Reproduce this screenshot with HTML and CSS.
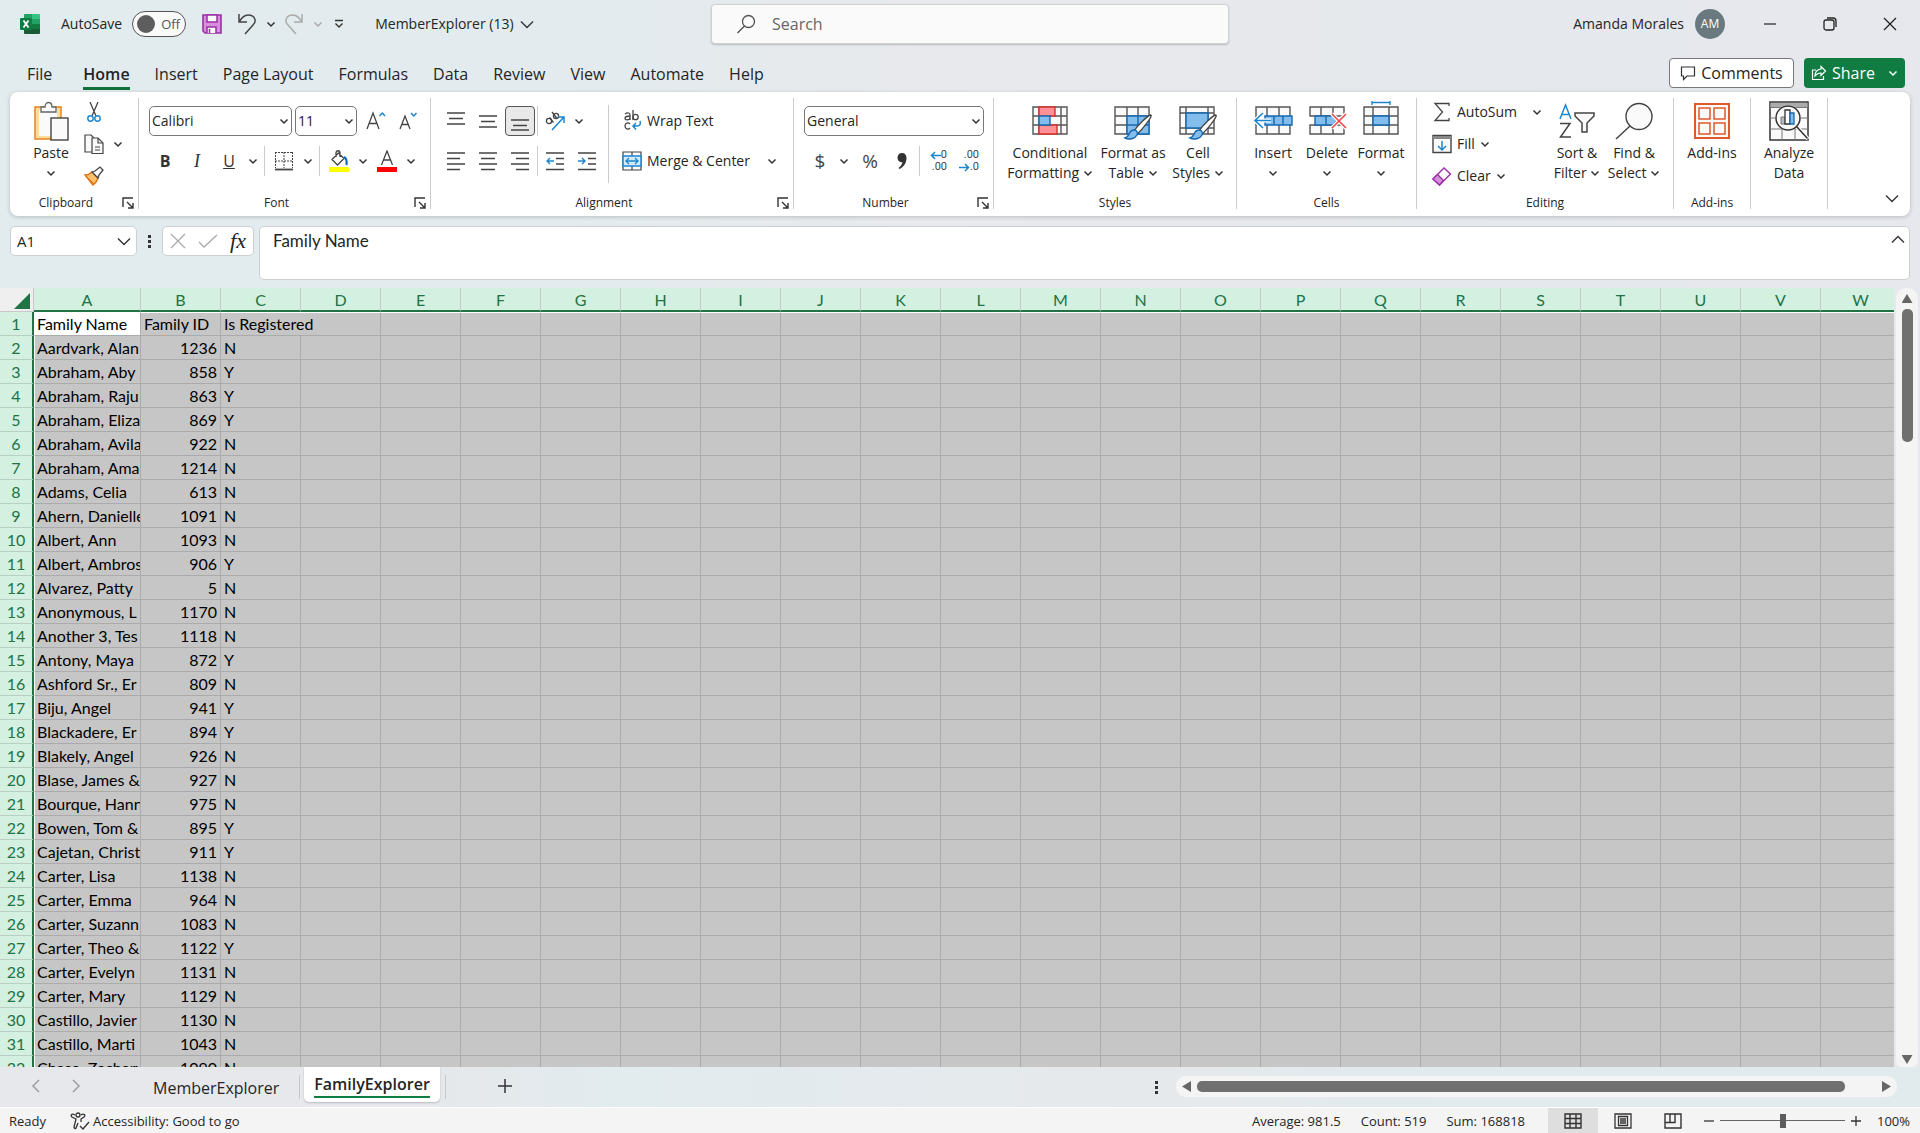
FILE: index.html
```html
<!DOCTYPE html>
<html lang="en">
<head>
<meta charset="utf-8">
<title>MemberExplorer (13)</title>
<link rel="stylesheet" href="styles.css">
</head>
<body>
<svg class="sprite" aria-hidden="true">
  <symbol id="chev" viewBox="0 0 10 10"><path d="M1.500 3.500 5 7l3.500-3.500" fill="none" stroke="currentColor" stroke-width="1.500"/></symbol>
  <symbol id="chev-lg" viewBox="0 0 14 14"><path d="M1 4.500 7 10.500l6-6" fill="none" stroke="currentColor" stroke-width="1.400"/></symbol>
  <symbol id="launch" viewBox="0 0 12 12"><path d="M1 10V1h10M5 5l5.500 5.500M11 6v5H6" fill="none" stroke="currentColor" stroke-width="1.400"/></symbol>
  <symbol id="brush" viewBox="0 0 30 28"><path d="M28 1c2 1-9 15-14 19l-3-3C15 11 25 1 28 1z" fill="#fff" stroke="#444" stroke-width="1.300"/><path d="M11 16c3 0 4 3 3 5-2 4-8 5-12 3 3-1 3-2 4-4s2-4 5-4z" fill="#83bdec" stroke="#1468b0" stroke-width="1.400"/></symbol>
</svg>

<header class="titlebar">
  <div class="quick">
    <svg class="logo" width="20" height="20" viewBox="0 0 20 20"><path d="M4 1a1 1 0 0 1 1-1h7v5H4z" fill="#21a366"/><path d="M12 0h7a1 1 0 0 1 1 1v4h-8z" fill="#33c481"/><path d="M4 5h8v5H4z" fill="#107c41"/><path d="M12 5h8v5h-8z" fill="#21a366"/><path d="M12 10h8v5h-8z" fill="#107c41"/><path d="M4 10h8v5h8v4a1 1 0 0 1-1 1H5a1 1 0 0 1-1-1z" fill="#185c37"/><rect y="4" width="12" height="12" rx="1" fill="#107c41"/><path d="m3.500 6.500 5 7M8.500 6.500l-5 7" stroke="#fff" stroke-width="1.800"/></svg>
    <label class="autosave"><span>AutoSave</span><span class="toggle"><input type="checkbox" role="switch"><span class="knob"></span><span class="off">Off</span></span></label>
    <button class="tool save" aria-label="Save"><svg width="22" height="22" viewBox="0 0 22 22"><path d="M2 2h18v18H4l-2-2z" fill="#d58fdb" stroke="#9b2fa5" stroke-width="1.600"/><path d="M6 2h10v7H6zM6 20v-6h9v6" fill="#fafafa" stroke="#9b2fa5" stroke-width="1.500"/><path d="M8.500 16v4" stroke="#9b2fa5" stroke-width="1.500"/></svg></button>
    <button class="tool" aria-label="Undo"><svg width="22" height="22" viewBox="0 0 22 22"><path d="M3 1v8h8M3 9c3-5 6-7 9-7 7 0 9 6 5 10l-8 9" fill="none" stroke="#444" stroke-width="1.500"/></svg></button>
    <button class="drop" aria-label="Undo history"><svg class="chev"><use href="#chev"/></svg></button>
    <button class="tool dim" aria-label="Redo"><svg width="22" height="22" viewBox="0 0 22 22"><path d="M19 1v8h-8M19 9c-3-5-6-7-9-7-7 0-9 6-5 10l8 9" fill="none" stroke="#aaa" stroke-width="1.500"/></svg></button>
    <button class="drop dim" aria-label="Redo history"><svg class="chev"><use href="#chev"/></svg></button>
    <button class="tool more" aria-label="Customize toolbar"><svg width="10" height="10" viewBox="0 0 10 10"><path d="M1 1.500h8M1.500 4.500 5 8l3.500-3.500" fill="none" stroke="#333" stroke-width="1.400"/></svg></button>
    <button class="docname">MemberExplorer (13) <svg class="chev-lg"><use href="#chev-lg"/></svg></button>
  </div>
  <label class="search"><svg width="20" height="20" viewBox="0 0 20 20"><circle cx="12.500" cy="7.500" r="6" fill="none" stroke="#555" stroke-width="1.300"/><path d="m8.500 12-7 7" stroke="#555" stroke-width="1.400"/></svg><input type="search" placeholder="Search" aria-label="Search"></label>
  <div class="account">
    <span>Amanda Morales</span><span class="avatar">AM</span>
    <button class="win" aria-label="Minimize"><svg width="14" height="14"><path d="M1 7h12" stroke="#222" stroke-width="1.200"/></svg></button>
    <button class="win" aria-label="Restore"><svg width="14" height="14" fill="none" stroke="#222" stroke-width="1.300"><rect x="1" y="3" width="10" height="10" rx="2"/><path d="M4 1h6a3 3 0 0 1 3 3v6"/></svg></button>
    <button class="win" aria-label="Close"><svg width="14" height="14"><path d="m1 1 12 12M13 1 1 13" stroke="#222" stroke-width="1.300"/></svg></button>
  </div>
</header>

<nav class="tabs">
  <a href="#">File</a><a href="#" class="current">Home</a><a href="#">Insert</a><a href="#">Page Layout</a><a href="#">Formulas</a><a href="#">Data</a><a href="#">Review</a><a href="#">View</a><a href="#">Automate</a><a href="#">Help</a>
  <button class="comments"><svg width="16" height="16" viewBox="0 0 16 16"><path d="M1.500 2h13v9H7l-3.500 3.500V11h-2z" fill="none" stroke="#333" stroke-width="1.200"/></svg>Comments</button>
  <button class="share"><svg width="16" height="16" viewBox="0 0 16 16"><path d="M5 5H1.500v9.500h11V11M10 1.500 14.500 6 10 10.500V8C7 8 5.500 9 4 11c0-4 2-6.500 6-7z" fill="none" stroke="#fff" stroke-width="1.200"/></svg>Share<svg class="chev"><use href="#chev"/></svg></button>
</nav>

<section class="ribbon" aria-label="Home ribbon">
  <div class="group clipboard">
    <div class="body">
      <button class="big paste"><svg width="36" height="40" viewBox="0 0 36 40"><rect x="2" y="6" width="26" height="32" fill="#fbdc9a" stroke="#e8821e" stroke-width="1.500"/><rect x="6" y="9" width="18" height="26" fill="#fafafa"/><path d="M8 11V6h4c0-6 7-6 7 0h4v5z" fill="#fafafa" stroke="#666" stroke-width="1.300"/><rect x="18" y="17" width="17" height="22" fill="#fafafa" stroke="#444" stroke-width="1.400"/></svg><span>Paste</span><svg class="chev"><use href="#chev"/></svg></button>
      <div class="stack">
        <button class="ic" aria-label="Cut"><svg width="20" height="20" viewBox="0 0 20 20" fill="none"><path d="M6 0 12 14M14 0 8 14" stroke="#444" stroke-width="1.300"/><circle cx="6.500" cy="16.500" r="2.700" stroke="#1a86d0" stroke-width="1.400"/><circle cx="13.500" cy="16.500" r="2.700" stroke="#1a86d0" stroke-width="1.400"/></svg></button>
        <div class="row"><button class="ic" aria-label="Copy"><svg width="20" height="20" viewBox="0 0 20 20" fill="#fafafa" stroke="#444" stroke-width="1.200"><path d="M8 18H1V1h6l3 3"/><path d="M8 4h6l5 5v10.500H8z"/><path d="M14 4v5h5M11 13h5M11 16h5" fill="none"/></svg></button><button class="drop" aria-label="Copy options"><svg class="chev"><use href="#chev"/></svg></button></div>
        <button class="ic" aria-label="Format painter"><svg width="20" height="20" viewBox="0 0 20 20"><path d="M1 9c4 0 5-1 7-3l6 6c-1 3-2 5-5 7z" fill="#fbc16a" stroke="#e07010" stroke-width="1.400"/><path d="m3 11 7 7" stroke="#e07010"/><path d="m8 6 3-1 5-4 3 3-4 5-1 3z" fill="#fafafa" stroke="#444" stroke-width="1.300"/></svg></button>
      </div>
    </div>
    <div class="caption"><span>Clipboard</span><button aria-label="Clipboard settings"><svg><use href="#launch"/></svg></button></div>
  </div>

  <div class="group font">
    <div class="body rows">
      <div class="row">
        <span class="combo family"><select aria-label="Font"><option>Calibri</option></select><svg class="chev"><use href="#chev"/></svg></span>
        <span class="combo size"><select aria-label="Font size"><option>11</option></select><svg class="chev"><use href="#chev"/></svg></span>
        <button class="ic" aria-label="Increase font size"><svg width="20" height="20" viewBox="0 0 20 20" fill="none" stroke="#444" stroke-width="1.300"><path d="M1 18 7 2l6 16M3.200 12.500h7.600"/><path d="m13.500 5 2.800-3L19 5" stroke="#1a86d0" stroke-width="1.500"/></svg></button>
        <button class="ic" aria-label="Decrease font size"><svg width="20" height="20" viewBox="0 0 20 20" fill="none" stroke="#444" stroke-width="1.300"><path d="M2 18 7 5l5 13M4 13.500h6"/><path d="m13 2 2.800 3 2.700-3" stroke="#1a86d0" stroke-width="1.500"/></svg></button>
      </div>
      <div class="row">
        <button class="ic letter"><b>B</b></button><button class="ic letter"><i>I</i></button><button class="ic letter"><u>U</u></button><button class="drop" aria-label="Underline options"><svg class="chev"><use href="#chev"/></svg></button>
        <i class="sep"></i>
        <button class="ic" aria-label="Borders"><svg width="20" height="20" viewBox="0 0 20 20" fill="none" stroke="#444"><path d="M1 1.500h18M1 10h18M1.500 1v16M10 1v16M18.500 1v16" stroke-dasharray="2 1"/><path d="M1 18.500h18" stroke-width="1.800"/></svg></button><button class="drop" aria-label="Border options"><svg class="chev"><use href="#chev"/></svg></button>
        <i class="sep"></i>
        <button class="ic" aria-label="Fill color"><svg width="20" height="22" viewBox="0 0 20 22"><path d="M3 9.500 9.500 3 15 8.500 8.500 15zM7 7V3c0-3 4-3 4 0v4" fill="none" stroke="#444" stroke-width="1.300"/><path d="M15 7c2 1 3 4 2.500 8" fill="none" stroke="#0f6cbd" stroke-width="2.200"/><path d="M0 17h20v5H0z" fill="#ff0"/></svg></button><button class="drop" aria-label="Fill options"><svg class="chev"><use href="#chev"/></svg></button>
        <button class="ic" aria-label="Font color"><svg width="20" height="22" viewBox="0 0 20 22"><path d="M4.500 15 10 1l5.500 14M6.500 10h7" fill="none" stroke="#444" stroke-width="1.300"/><path d="M0 17h20v5H0z" fill="#f00"/></svg></button><button class="drop" aria-label="Font color options"><svg class="chev"><use href="#chev"/></svg></button>
      </div>
    </div>
    <div class="caption"><span>Font</span><button aria-label="Font settings"><svg><use href="#launch"/></svg></button></div>
  </div>

  <div class="group align">
    <div class="body">
      <div class="rows">
        <div class="row">
          <button class="ic" aria-label="Top align"><svg width="18" height="20" stroke="#444" stroke-width="1.400"><path d="M0 2h18M2 7.500h14M0 13h18"/></svg></button><button class="ic" aria-label="Middle align"><svg width="18" height="20" stroke="#444" stroke-width="1.400"><path d="M0 5h18M2 10.500h14M0 16h18"/></svg></button><button class="ic pressed" aria-label="Bottom align"><svg width="18" height="20" stroke="#444" stroke-width="1.400"><path d="M0 9h18M2 14.500h14M0 19h18"/></svg></button><i class="sep tight"></i>
          <button class="ic" aria-label="Orientation"><svg width="20" height="20" viewBox="0 0 20 20" fill="none"><g stroke="#444" stroke-width="1.300"><circle cx="4" cy="10" r="2.600"/><path d="m4.500 6.500 4 5M7 1l5 6.500"/><circle cx="11" cy="5" r="2.600"/></g><path d="M7 19 19 6M13 6h6v6" stroke="#1a86d0" stroke-width="1.500"/></svg></button><button class="drop" aria-label="Orientation options"><svg class="chev"><use href="#chev"/></svg></button>
        </div>
        <div class="row">
          <button class="ic" aria-label="Align left"><svg width="18" height="20" stroke="#444" stroke-width="1.400"><path d="M0 2h18M0 7.500h13M0 13h18M0 18.500h13"/></svg></button><button class="ic" aria-label="Center"><svg width="18" height="20" stroke="#444" stroke-width="1.400"><path d="M0 2h18M2 7.500h14M0 13h18M2 18.500h14"/></svg></button><button class="ic" aria-label="Align right"><svg width="18" height="20" stroke="#444" stroke-width="1.400"><path d="M0 2h18M5 7.500h13M0 13h18M5 18.500h13"/></svg></button><i class="sep tight"></i>
          <button class="ic" aria-label="Decrease indent"><svg width="18" height="20" fill="none" stroke="#444" stroke-width="1.400"><path d="M0 2h18M10 7.500h8M10 13h8M0 18.500h18"/><path d="M8 10H1M4 7l-3 3 3 3" stroke="#1a86d0"/></svg></button><button class="ic" aria-label="Increase indent"><svg width="18" height="20" fill="none" stroke="#444" stroke-width="1.400"><path d="M0 2h18M10 7.500h8M10 13h8M0 18.500h18"/><path d="M0 10h7M4 7l3 3-3 3" stroke="#1a86d0"/></svg></button>
        </div>
      </div>
      <i class="sep tall"></i>
      <div class="rows wide">
        <button class="line"><svg width="20" height="22" viewBox="0 0 20 22" fill="none" stroke="#444" stroke-width="1.300"><path d="M3 4c3-2 5-1 5 1v5M8 6C5 6 3 7 3 8.500S7 11 8 8M11 0v10"/><circle cx="13.500" cy="7" r="2.700"/><path d="M8 14c-2-2-5-1-5 2s3 4 5 2"/><path d="M18 11c1 3 0 5-3 5h-4M14 13l-3 3 3 3.500" stroke="#1a86d0" stroke-width="1.500"/></svg>Wrap Text</button>
        <div class="row"><button class="line"><svg width="20" height="20" viewBox="0 0 20 20" fill="#fafafa" stroke="#444" stroke-width="1.200"><path d="M1 1h18v18H1zM10 1v18"/><path d="M1 5h18v10H1z" fill="#d4eafa" stroke="#1a86d0" stroke-width="1.500"/><path d="M4 10h12M7 7l-3 3 3 3M13 7l3 3-3 3" fill="none" stroke="#1a86d0" stroke-width="1.300"/></svg>Merge &amp; Center</button><button class="drop end" aria-label="Merge options"><svg class="chev"><use href="#chev"/></svg></button></div>
      </div>
    </div>
    <div class="caption"><span>Alignment</span><button aria-label="Alignment settings"><svg><use href="#launch"/></svg></button></div>
  </div>

  <div class="group number">
    <div class="body rows">
      <div class="row"><span class="combo format"><select aria-label="Number format"><option>General</option></select><svg class="chev"><use href="#chev"/></svg></span></div>
      <div class="row">
        <button class="ic sign">$</button><button class="drop" aria-label="Currency options"><svg class="chev"><use href="#chev"/></svg></button><button class="ic sign pct">%</button><button class="ic" aria-label="Comma style"><svg width="10" height="18" viewBox="0 0 10 18"><path d="M5 1c3 0 4.500 2 4.500 5 0 5-3 9-7 11l-1-1c2-1.500 3.500-3.500 4-6C2.500 11 .500 8 .500 5.500.500 3 2.500 1 5 1z" fill="#333"/></svg></button><i class="sep tight"></i>
        <button class="ic dec" aria-label="Increase decimal"><span><svg width="11" height="9" fill="none" stroke="#1a86d0" stroke-width="1.500"><path d="M11 4.500H1M5 1 1.500 4.500 5 8"/></svg>0</span><span>.00</span></button><button class="ic dec" aria-label="Decrease decimal"><span>.00</span><span><svg width="11" height="9" fill="none" stroke="#1a86d0" stroke-width="1.500"><path d="M0 4.500h10M6 1l3.500 3.500L6 8"/></svg>.0</span></button>
      </div>
    </div>
    <div class="caption"><span>Number</span><button aria-label="Number settings"><svg><use href="#launch"/></svg></button></div>
  </div>

  <div class="group styles">
    <div class="body">
      <button class="big b90"><svg width="36" height="40" viewBox="0 0 36 40" fill="#fafafa" stroke="#555" stroke-width="1.400"><path d="M1 6h34v27H1zM1 15h34M1 24h34M7 6v27M29 6v27"/><path d="M7 6h16v9H7zM7 24h18v9H7z" fill="#ff9196" stroke="#d8302a"/><path d="M7 15h11v9H7z" fill="#83bdec" stroke="#1468b0"/></svg><span>Conditional<br>Formatting <svg class="chev"><use href="#chev"/></svg></span></button>
      <button class="big b76"><svg width="40" height="40" viewBox="0 0 40 40" fill="#fafafa" stroke="#555" stroke-width="1.400"><path d="M2 6h34v27H2zM2 15h34M2 24h34M14 6v27M25 6v27"/><path d="M14 15h22v18H14zM14 24h22M25 15v18" fill="#83bdec" stroke="#1468b0"/><use href="#brush" x="10" y="13" width="30" height="28"/></svg><span>Format as<br>Table <svg class="chev"><use href="#chev"/></svg></span></button>
      <button class="big b54"><svg width="40" height="40" viewBox="0 0 40 40" fill="#fafafa" stroke="#555" stroke-width="1.400"><path d="M2 6h34v27H2zM2 12h34M2 27h34M8 6v27M30 6v27"/><path d="M8 12h22v15H8z" fill="#83bdec" stroke="#1468b0"/><use href="#brush" x="10" y="13" width="30" height="28"/></svg><span>Cell<br>Styles <svg class="chev"><use href="#chev"/></svg></span></button>
    </div>
    <div class="caption"><span>Styles</span></div>
  </div>

  <div class="group cells">
    <div class="body">
      <button class="big b54"><svg width="40" height="40" viewBox="0 0 40 40" fill="#fafafa" stroke="#555" stroke-width="1.400"><path d="M3 6h34v27H3zM14 6v27M26 6v27"/><path d="M12 15h27v9H12zM21 15v9M30 15v9" fill="#83bdec" stroke="#1468b0"/><path d="M18 19.500H2M10 12l-8 7.500 8 7.500" fill="none" stroke="#fff" stroke-width="4"/><path d="M18 19.500H2M10 12l-8 7.500 8 7.500" fill="none" stroke="#1a86d0" stroke-width="1.600"/></svg><span>Insert<br><svg class="chev"><use href="#chev"/></svg></span></button>
      <button class="big b54"><svg width="40" height="40" viewBox="0 0 40 40" fill="#fafafa" stroke="#555" stroke-width="1.400"><path d="M3 6h34v9H3zM3 24h34v9H3zM14 6v9M26 6v9M14 24v9M26 24v9"/><path d="M8 15h18l4 4.500-4 4.500H8zM19 15v9" fill="#83bdec" stroke="#1468b0"/><path d="m25 13 14 14M39 13 25 27" stroke="#fff" stroke-width="4"/><path d="m25 13 14 14M39 13 25 27" stroke="#f04848" stroke-width="1.600"/></svg><span>Delete<br><svg class="chev"><use href="#chev"/></svg></span></button>
      <button class="big b54"><svg width="40" height="40" viewBox="0 0 40 40" fill="#fafafa" stroke="#555" stroke-width="1.400"><path d="M3 6h34v27H3zM3 15h34M3 24h34M12 6v27M28 6v27"/><path d="M12 15h16v9H12z" fill="#83bdec" stroke="#1468b0"/><path d="M11 1.500h18M11 0v4M29 0v4" stroke="#1a86d0"/></svg><span>Format<br><svg class="chev"><use href="#chev"/></svg></span></button>
    </div>
    <div class="caption"><span>Cells</span></div>
  </div>

  <div class="group editing">
    <div class="body">
      <div class="stack wide">
        <div class="row"><button class="line"><svg width="20" height="20" viewBox="0 0 20 20"><path d="M17 4V1.500H3L10.500 10 3 18.500h14V16" fill="none" stroke="#444" stroke-width="1.300"/></svg>AutoSum</button><button class="drop end" aria-label="AutoSum options"><svg class="chev"><use href="#chev"/></svg></button></div>
        <button class="line"><svg width="20" height="20" viewBox="0 0 20 20"><path d="M1 1.500h18v17H1z" fill="#fafafa" stroke="#444" stroke-width="1.400"/><path d="M1 2h18v3H1z" fill="#888"/><path d="M10 7v9M6 12l4 4 4-4" fill="none" stroke="#1a86d0" stroke-width="1.500"/></svg>Fill <svg class="chev"><use href="#chev"/></svg></button>
        <button class="line"><svg width="20" height="20" viewBox="0 0 20 20"><path d="m1 13 11-11 6.500 6-11 11z" fill="#fafafa" stroke="#9b2fa5" stroke-width="1.400"/><path d="m1 13 4.500-4.500 6 6-4 4.500z" fill="#d58fdb" stroke="#9b2fa5" stroke-width="1.400"/></svg>Clear <svg class="chev"><use href="#chev"/></svg></button>
      </div>
      <button class="big b56"><svg width="38" height="40" viewBox="0 0 38 40" fill="none" stroke="#444" stroke-width="1.500"><path d="M2 18 7.500 4 13 18M4 13.500h7" stroke="#1a86d0"/><path d="M2 22.500h10L2.500 36H13"/><path d="M17 12h19v3l-7 7v9h-5v-9l-7-7z" fill="#fafafa"/></svg><span>Sort &amp;<br>Filter <svg class="chev"><use href="#chev"/></svg></span></button>
      <button class="big b58"><svg width="38" height="40" viewBox="0 0 38 40"><circle cx="24" cy="15.500" r="13" fill="#fafafa" stroke="#444" stroke-width="1.400"/><path d="M15 25 1 38" stroke="#444" stroke-width="1.500"/></svg><span>Find &amp;<br>Select <svg class="chev"><use href="#chev"/></svg></span></button>
    </div>
    <div class="caption"><span>Editing</span></div>
  </div>

  <div class="group single">
    <div class="body"><button class="big b76"><svg width="36" height="40" viewBox="0 0 36 40" fill="#fafafa" stroke="#e0592a" stroke-width="1.500"><path d="M1 3h34v34H1z" stroke-width="2"/><path d="M5 7h11v11H5zM20 7h11v11H20zM5 22h11v11H5zM20 22h11v11H20z"/></svg><span>Add-ins</span></button></div>
    <div class="caption"><span>Add-ins</span></div>
  </div>

  <div class="group single">
    <div class="body"><button class="big b76"><svg width="40" height="40" viewBox="0 0 40 40"><path d="M1 1h38v38H1z" fill="#fafafa" stroke="#333" stroke-width="1.500"/><path d="M1.500 2h37v4h-37z" fill="#aaa"/><path d="M1 6.500h38M1 17h38M1 28h38M13 28v11M26 28v11" stroke="#777"/><path d="m28 26 11 12" stroke="#fff" stroke-width="4"/><circle cx="19" cy="17" r="13" fill="#fff"/><circle cx="19" cy="17" r="12" fill="#fafafa" stroke="#333" stroke-width="1.500"/><path d="M12 16h4v7h-4z" fill="#bbb" stroke="#777"/><path d="M16 9h5v14h-5z" fill="#fff" stroke="#333" stroke-width="1.300"/><path d="M21 12h4v11h-4z" fill="#83bdec" stroke="#1468b0" stroke-width="1.300"/><path d="m27.500 25.500 11 12" stroke="#333" stroke-width="1.600"/></svg><span>Analyze<br>Data</span></button></div>
    <div class="caption"></div>
  </div>
  <button class="collapse" aria-label="Collapse ribbon"><svg class="chev-lg"><use href="#chev-lg"/></svg></button>
</section>

<section class="formulabar">
  <div class="namebox"><input value="A1" aria-label="Name box"><button aria-label="Names"><svg class="chev-lg"><use href="#chev-lg"/></svg></button></div>
  <i class="dots"></i>
  <div class="fx">
    <button aria-label="Cancel"><svg width="16" height="16"><path d="m1 1 14 14M15 1 1 15" stroke="#aaa" stroke-width="1.300"/></svg></button>
    <button aria-label="Enter"><svg width="20" height="16"><path d="m1 9 5 5L19 2" fill="none" stroke="#aaa" stroke-width="1.300"/></svg></button>
    <button class="fn">fx</button>
  </div>
  <div class="formula"><textarea aria-label="Formula" rows="2">Family Name</textarea><button aria-label="Collapse formula bar"><svg class="chev-lg up"><use href="#chev-lg"/></svg></button></div>
</section>

<main class="workspace">
  <div class="sheet"><table id="grid"></table></div>
  <div class="vscroll"><i class="arrow north"></i><i class="thumb"></i><i class="arrow south"></i></div>
</main>

<div class="sheetbar">
  <button class="nav" aria-label="Previous sheet"><svg width="10" height="14"><path d="M8 1 2 7l6 6" fill="none" stroke="#999" stroke-width="1.400"/></svg></button>
  <button class="nav" aria-label="Next sheet"><svg width="10" height="14"><path d="m2 1 6 6-6 6" fill="none" stroke="#999" stroke-width="1.400"/></svg></button>
  <button class="tab">MemberExplorer</button>
  <i class="divider"></i>
  <button class="tab active"><span>FamilyExplorer</span></button>
  <i class="divider"></i>
  <button class="add" aria-label="New sheet"><svg width="16" height="16"><path d="M8 1v14M1 8h14" stroke="#333" stroke-width="1.500"/></svg></button>
  <i class="dots"></i>
  <div class="hscroll"><i class="arrow west"></i><i class="thumb"></i><i class="arrow east"></i></div>
</div>

<footer class="status">
  <span>Ready</span>
  <span class="access"><svg width="20" height="18" viewBox="0 0 20 18" fill="none" stroke="#333" stroke-width="1.300"><circle cx="8" cy="3" r="2"/><path d="M5 3C2 1 0 3 2 5l4 2-2 8c0 2 2 2 2 1l2-5M11 3c3-2 5 0 3 2l-3 2v3M10 14l3 3 6-7"/></svg>Accessibility: Good to go</span>
  <span class="sum">Average: 981.5</span><span class="sum">Count: 519</span><span class="sum">Sum: 168818</span>
  <div class="views">
    <button class="on" aria-label="Normal view"><svg width="18" height="16" fill="none" stroke="#333" stroke-width="1.400"><path d="M1 1h16v14H1zM1 5.500h16M1 10.500h16M6 1v14M12 1v14"/></svg></button>
    <button aria-label="Page layout view"><svg width="18" height="16" fill="none" stroke="#333" stroke-width="1.300"><path d="M1 1h16v14H1zM4.500 3.500h9v9h-9zM6 6h6M6 8h6M6 10h6"/></svg></button>
    <button aria-label="Page break view"><svg width="18" height="16" fill="none" stroke="#333" stroke-width="1.400"><path d="M1 1h16v14H1zM1 9.500h10V1M6 1v8.500"/></svg></button>
  </div>
  <button class="zoom" aria-label="Zoom out"><svg width="10" height="10"><path d="M0 5h10" stroke="#333" stroke-width="1.300"/></svg></button>
  <input class="slider" type="range" min="0" max="100" value="50" aria-label="Zoom">
  <button class="zoom" aria-label="Zoom in"><svg width="10" height="10"><path d="M0 5h10M5 0v10" stroke="#333" stroke-width="1.300"/></svg></button>
  <span class="percent">100%</span>
</footer>
<script src="grid.js"></script>
</body>
</html>
```

FILE: styles.css
```css
* { box-sizing: border-box; }
html, body { height: 100%; }
body {
  margin: 0;
  display: flex;
  flex-direction: column;
  overflow: hidden;
  background: linear-gradient(90deg, #e2ebee 0, #e3ebee 30%, #e8e9ec 50%, #e5e8ec 75%, #e6e8ee 100%);
  color: #252525;
  font: 14px/20px "Open Sans", "Noto Sans", sans-serif;
}
button, input, select, textarea { font: inherit; color: inherit; margin: 0; }
button { padding: 0; border: 0; background: none; display: flex; align-items: center; justify-content: center; flex: none; white-space: nowrap; }
svg { flex: none; display: block; }
.sprite { display: none; }
.chev { width: 10px; height: 10px; color: #333; }
.chev-lg { width: 14px; height: 14px; color: #333; }
.up { transform: rotate(180deg); }

/* title bar */
.titlebar { height: 48px; flex: none; display: grid; grid-template-columns: minmax(0, 1fr) 518px minmax(0, 1fr); padding-left: 20px; }
.quick, .account { display: flex; align-items: center; }
.autosave { display: flex; align-items: center; gap: 10px; margin-left: 21px; }
.toggle { width: 54px; height: 26px; border: 1px solid #555; border-radius: 13px; background: #fafafa; display: flex; align-items: center; gap: 6px; padding-left: 4px; font-size: 13px; color: #555; }
.toggle input { position: absolute; opacity: 0; }
.knob { width: 18px; height: 18px; border-radius: 50%; background: #5d5d5d; }
.tool { width: 32px; height: 32px; }
.drop { width: 16px; height: 30px; }
.dim .chev { color: #aaa; }
.save { margin: 0 3px 0 10px; }
.quick .drop { width: 15px; }
.more { width: 28px; }
.docname { margin-left: 22px; gap: 6px; }
.search { height: 40px; margin: 4px 0; padding: 0 24px; display: flex; align-items: center; gap: 16px; background: #fafafa; border: 1px solid #cfd1d3; border-radius: 4px; box-shadow: 0 1px 2px #0003; font-size: 16px; }
.search input { flex: 1; border: 0; background: none; outline: 0; padding: 0; }
.search input::placeholder { color: #666; opacity: 1; }
.account { justify-content: flex-end; padding-right: 10px; }
.avatar { width: 30px; height: 30px; margin: 0 15px 0 11px; border-radius: 50%; background: #69797e; color: #fff; font-size: 12px; line-height: 30px; text-align: center; }
.win { width: 60px; height: 40px; }
.account .win:last-child { width: 40px; margin-left: 10px; }

/* ribbon tabs */
.tabs { height: 44px; flex: none; display: flex; align-items: center; gap: 25px; padding: 8px 15px 0 27px; font-size: 16px; line-height: 24px; }
.tabs a { color: inherit; text-decoration: none; padding: 2px 0 1px; border-bottom: 3px solid transparent; margin-top: 2px; }
.tabs a:first-child { margin-right: 6px; }
.tabs .current { font-weight: 600; border-color: #0f703b; }
.comments, .share { height: 30px; border-radius: 4px; gap: 5px; margin-bottom: 2px; }
.comments { width: 125px; margin-left: auto; margin-right: -15px; background: #fff; border: 1px solid #777; }
.share { width: 101px; background: #107c41; color: #fff; }
.share .chev { color: #fff; margin-left: 8px; }

/* ribbon */
.ribbon { height: 124px; flex: none; display: flex; margin: 0 10px; padding: 6px 0 7px; background: #fff; border-radius: 8px; box-shadow: 0 1px 4px #0003; }
.group { flex: none; display: flex; flex-direction: column; border-right: 1px solid #ccc; }
.body { height: 97px; flex: none; display: flex; align-items: flex-start; }
.body.rows, .rows { display: flex; flex-direction: column; gap: 10px; align-items: flex-start; padding-top: 8px; }
.row { display: flex; align-items: center; }
.caption { height: 16px; flex: none; display: flex; align-items: center; font-size: 12px; line-height: 16px; padding-right: 4px; }
.caption span { flex: 1; text-align: center; }
.caption svg { width: 12px; height: 12px; color: #333; }
.ic { width: 32px; height: 30px; }
.sep { width: 1px; height: 30px; margin: 0 3px; background: #ccc; flex: none; }
.sep.tight { margin: 0 1px; }
.sep.tall { height: 78px; margin: 7px 13px 0 5px; }
.big { flex-direction: column; justify-content: flex-start; margin-top: 3px; text-align: center; }
.big > span { margin-top: 2px; }
.big span .chev { display: inline-block; }
.b54 { width: 54px; } .b56 { width: 56px; } .b58 { width: 58px; } .b76 { width: 76px; } .b90 { width: 90px; }
.line { height: 30px; gap: 5px; }
.stack { display: flex; flex-direction: column; align-items: flex-start; margin-top: -2px; }
.stack .ic, .stack .line { height: 32px; }
.combo { display: grid; align-items: center; height: 30px; border: 1px solid #777; border-radius: 5px; background: #fff; margin-right: 3px; }
.combo > * { grid-area: 1 / 1; }
.combo select { appearance: none; width: 100%; height: 28px; padding: 0 0 0 2px; border: 0; background: none; outline: 0; }
.combo .chev { justify-self: end; margin-right: 2px; pointer-events: none; }
.family { width: 143px; } .size { width: 62px; } .format { width: 180px; }
.pressed { width: 30px; margin: 0 1px; background: #e9e9e9; border: 1px solid #555; border-radius: 4px; }
.letter { font-size: 16px; color: #333; }
.letter i { font-family: "Liberation Serif", serif; font-size: 18px; }
.sign { font-size: 19px; color: #444; }
.pct { margin-left: 2px; }
.dec { flex-direction: column; font: 11px/12px Roboto, sans-serif; color: #444; align-items: flex-end; padding-right: 6px; }
.dec span { display: flex; align-items: center; }

.clipboard { width: 129px; } .clipboard .body { padding-left: 18px; }
.paste { width: 46px; margin-right: 4px; } .paste .chev { margin-top: 5px; }
.font { width: 292px; } .font .body { padding-left: 10px; }
.align { width: 363px; } .align .body { padding-left: 9px; }
.rows.wide { width: 158px; } .rows.wide .row { width: 100%; }
.end { margin-left: auto; }
.number { width: 200px; } .number .body { padding-left: 10px; }
.styles { width: 243px; } .styles .body { padding-left: 11px; }
.cells { width: 180px; } .cells .body { padding-left: 9px; }
.editing { width: 257px; } .editing .body { padding-left: 15px; }
.stack.wide { width: 117px; } .stack.wide .row { width: 113px; }
.single { width: 77px; }
.single .caption, .styles .caption, .cells .caption, .editing .caption { padding-right: 0; }
.collapse { margin: auto 3px 0 auto; width: 30px; height: 22px; }

/* formula bar */
.formulabar { flex: none; display: flex; align-items: flex-start; padding: 10px 10px 8px; }
.namebox, .fx, .formula { display: flex; background: #fff; border: 1px solid #cdd0d2; border-radius: 5px; height: 30px; }
.namebox { width: 127px; padding: 0 4px 0 6px; }
.namebox input { flex: 1; min-width: 0; border: 0; background: none; padding: 0; font-size: 15px; }
.namebox button { width: 16px; }
.dots { width: 3px; height: 13px; margin: 9px 11px 0; background: repeating-linear-gradient(#333 0 3px, transparent 3px 5px); flex: none; }
.fx { width: 92px; margin-right: 5px; }
.fx button { flex: 1; }
.fn { font: italic 22px/28px "Liberation Serif", serif; color: #222; }
.formula { flex: 1; height: 54px; align-items: flex-start; }
.formula textarea { flex: 1; border: 0; resize: none; outline: 0; background: none; padding: 3px 13px; font: 17px/22px Lato, sans-serif; height: 50px; }
.formula button { width: 24px; height: 26px; margin-right: -1px; }

/* worksheet */
.workspace { flex: 1; min-height: 0; display: flex; }
.sheet { flex: 1; min-width: 0; overflow: hidden; background: #c6c6c6; font: 16px/22px Lato, sans-serif; color: #000; }
table { border-collapse: separate; border-spacing: 0; table-layout: fixed; width: 0; }
th { font-weight: 400; color: #217346; background: #d3f0e0; padding: 0; text-align: center; overflow: hidden; }
thead th { height: 24px; border-right: 1px solid #c8c8c8; border-bottom: 2px solid #217346; line-height: 21px; }
thead th:first-child { background: #efefef; border-bottom: 1px solid #c8c8c8; }
thead th:first-child i { display: block; margin: 3px 3px 0 auto; width: 16px; height: 16px; background: #217346; clip-path: polygon(100% 0, 100% 100%, 0 100%); }
tbody th { border-right: 2px solid #217346; border-bottom: 1px solid #b9cfc3; }
td { height: 24px; padding: 1px 3px 0; border-right: 1px solid #ababab; border-bottom: 1px solid #ababab; overflow: hidden; white-space: nowrap; }
tbody tr:first-child td { border-top: 1px solid #fff; padding-top: 0; }
tbody th + td { border-left: 1px solid #fff; padding-left: 2px; padding-right: 0; }
td.cursor { background: #fff; }
td.num { text-align: right; }
.col-head { width: 34px; } .col-a { width: 107px; } .col { width: 80px; }
.vscroll { width: 22px; margin: 0 2px -3px; background: #f4f4f4; border-radius: 10px; display: flex; flex-direction: column; align-items: center; padding: 6px 0; }
.vscroll .thumb { width: 11px; height: 133px; margin-top: 6px; }
.thumb { background: #707070; border-radius: 5px; }
.arrow { background: #666; flex: none; }
.north { width: 11px; height: 9px; clip-path: polygon(50% 0, 100% 100%, 0 100%); }
.south { width: 11px; height: 9px; margin-top: auto; clip-path: polygon(0 0, 100% 0, 50% 100%); }
.west { width: 9px; height: 11px; clip-path: polygon(100% 0, 100% 100%, 0 50%); }
.east { width: 9px; height: 11px; margin-left: auto; clip-path: polygon(0 0, 100% 50%, 0 100%); }

/* sheet tabs */
.sheetbar { height: 40px; flex: none; display: flex; align-items: flex-start; padding: 0 23px 0 16px; background: linear-gradient(90deg, #e7e8eb 0, #e6e8eb 22%, #e2ebee 32%, #e6e9ec 60%, #e1eaed 75%, #e1eaed 100%); font-size: 16px; }
.nav { width: 40px; height: 38px; }
.tab { height: 42px; margin-left: 57px; }
.divider { width: 1px; height: 24px; margin: 8px 0 0 20px; background: #c6c8cb; }
.active { height: 35px; margin-left: 4px; padding: 0 10px; background: #fff; border-radius: 0 0 5px 5px; box-shadow: 0 1px 2px #0003; font-weight: 600; }
.active + .divider { margin-left: 5px; }
.active span { border-bottom: 2px solid #107c41; line-height: 24px; }
.add { height: 38px; margin-left: 51px; }
.sheetbar .dots { margin: 14px 18px 0 auto; }
.hscroll { width: 721px; height: 21px; margin-top: 9px; padding: 0 6px; display: flex; align-items: center; border-radius: 10px; background: #f4f4f4; }
.hscroll .thumb { width: 648px; height: 11px; margin-left: 6px; }

/* status bar */
.status { height: 26px; flex: none; display: flex; align-items: center; padding: 0 10px 0 9px; background: #f4f4f4; border-top: 1px solid #fff; font-size: 13px; line-height: 18px; white-space: nowrap; }
.access { display: flex; align-items: center; gap: 3px; margin: 0 auto 0 24px; }
.sum { margin-right: 20px; }
.views { display: flex; align-self: stretch; margin: 0 6px 0 3px; }
.views button { width: 50px; height: 25px; }
.views .on { background: #dedede; }
.slider { appearance: none; width: 125px; height: 16px; margin: 0 6px; background: linear-gradient(#666, #666) center / 100% 1px no-repeat; }
.slider::-webkit-slider-thumb { appearance: none; width: 6px; height: 14px; background: #5c5c5c; border-radius: 0; }
.percent { width: 49px; text-align: right; }
```

FILE: grid.js
```js
const rows = [
  ["Family Name", "Family ID", "Is Registered"],
  ["Aardvark, Alan", 1236, "N"], ["Abraham, Aby", 858, "Y"], ["Abraham, Raju", 863, "Y"],
  ["Abraham, Eliza", 869, "Y"], ["Abraham, Avila", 922, "N"], ["Abraham, Ama", 1214, "N"],
  ["Adams, Celia", 613, "N"], ["Ahern, Danielle", 1091, "N"], ["Albert, Ann", 1093, "N"],
  ["Albert, Ambros", 906, "Y"], ["Alvarez, Patty", 5, "N"], ["Anonymous, L", 1170, "N"],
  ["Another 3, Tes", 1118, "N"], ["Antony, Maya", 872, "Y"], ["Ashford Sr., Er", 809, "N"],
  ["Biju, Angel", 941, "Y"], ["Blackadere, Er", 894, "Y"], ["Blakely, Angel", 926, "N"],
  ["Blase, James &", 927, "N"], ["Bourque, Hann", 975, "N"], ["Bowen, Tom &", 895, "Y"],
  ["Cajetan, Christ", 911, "Y"], ["Carter, Lisa", 1138, "N"], ["Carter, Emma", 964, "N"],
  ["Carter, Suzann", 1083, "N"], ["Carter, Theo &", 1122, "Y"], ["Carter, Evelyn", 1131, "N"],
  ["Carter, Mary", 1129, "N"], ["Castillo, Javier", 1130, "N"], ["Castillo, Marti", 1043, "N"],
  ["Chase, Zachary", 1090, "N"]
];
const letters = [..."ABCDEFGHIJKLMNOPQRSTUVW"];

const cols = '<col class="col-head"><col class="col-a">' + '<col class="col">'.repeat(22);
const head = "<tr><th><i></i></th>" + letters.map(l => `<th scope="col">${l}</th>`).join("") + "</tr>";
const body = rows.map(([name, id, reg], r) => {
  const first = r === 0;
  return `<tr><th scope="row">${r + 1}</th>` +
    `<td${first ? ' class="cursor"' : ""}>${name.replace("&", "&amp;")}</td>` +
    `<td${first ? "" : ' class="num"'}>${id}</td>` +
    `<td${first ? ' colspan="2"' : ""}>${reg}</td>` +
    "<td></td>".repeat(first ? 19 : 20) + "</tr>";
}).join("");
document.getElementById("grid").innerHTML =
  `<colgroup>${cols}</colgroup><thead>${head}</thead><tbody>${body}</tbody>`;
```
